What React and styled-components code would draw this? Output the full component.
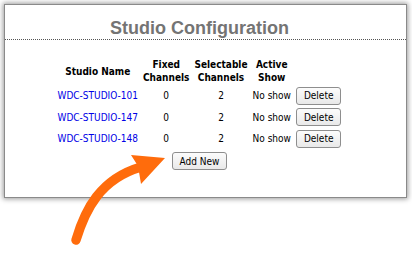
import React from 'react';
import styled, { createGlobalStyle } from 'styled-components';

const studios = [
    { name: 'WDC-STUDIO-101', fixed: 0, selectable: 2, show: 'No show' },
    { name: 'WDC-STUDIO-147', fixed: 0, selectable: 2, show: 'No show' },
    { name: 'WDC-STUDIO-148', fixed: 0, selectable: 2, show: 'No show' },
];

export default function App() {
    return (
        <>
            <Global />
            <Page>
                <Panel>
                    <Title>Studio Configuration</Title>
                    <Body>
                        <Table>
                            <colgroup>
                                <col style={{ width: 80 }} />
                                <col style={{ width: 46 }} />
                                <col style={{ width: 51 }} />
                                <col style={{ width: 37 }} />
                                <col style={{ width: 45 }} />
                            </colgroup>
                            <thead>
                                <tr>
                                    <Th>Studio Name</Th>
                                    <Th>Fixed Channels</Th>
                                    <Th>Selectable Channels</Th>
                                    <Th>Active Show</Th>
                                    <Th />
                                </tr>
                            </thead>
                            <tbody>
                                {studios.map(s => (
                                    <tr key={s.name}>
                                        <Td><StudioLink href="#">{s.name}</StudioLink></Td>
                                        <Td>{s.fixed}</Td>
                                        <Td>{s.selectable}</Td>
                                        <Td>{s.show}</Td>
                                        <Td><Button>Delete</Button></Td>
                                    </tr>
                                ))}
                            </tbody>
                        </Table>
                        <Actions>
                            <Button>Add New</Button>
                        </Actions>
                    </Body>
                </Panel>
                <Arrow width="412" height="255" viewBox="0 0 412 255">
                    <path
                        d="M 76 240 C 85 210, 100 179, 141 167"
                        fill="none"
                        stroke="#ff6c0c"
                        strokeWidth="9.5"
                        strokeLinecap="round"
                    />
                    <path d="M 165 158 L 131 155 L 138 166 L 141 184 Z" fill="#ff6c0c" />
                </Arrow>
            </Page>
        </>
    );
}

const Global = createGlobalStyle`
    html, body {
        margin: 0;
        background: #fff;
    }
    body {
        font-family: "DejaVu Sans Condensed", "DejaVu Sans", "Liberation Sans", sans-serif;
        font-stretch: condensed;
    }
`;

const Page = styled.div`
    position: relative;
    width: 412px;
    height: 255px;
    padding: 5px;
    box-sizing: border-box;
    overflow: hidden;
`;

const Panel = styled.div`
    width: 401px;
    background: #fff;
    box-shadow: 0 0 0 1px #8a8a8a, 0 0 5px 2px rgba(0, 0, 0, 0.4);
`;

const Title = styled.div`
    padding: 12px 12px 0 0;
    font-family: "Liberation Sans", Arial, sans-serif;
    font-stretch: normal;
    font-weight: 700;
    font-size: 18px;
    line-height: 22px;
    color: #747474;
    text-align: center;
    border-bottom: 1px dotted #555;
`;

const Body = styled.div`
    padding: 16px 12px 27px 0;
`;

const Table = styled.table`
    table-layout: fixed;
    border-collapse: separate;
    border-spacing: 5px 2px;
    margin: 0 auto;
    font-size: 10px;
    color: #000;
`;

const Th = styled.th`
    padding: 0;
    height: 26px;
    line-height: 13px;
    font-weight: 700;
    text-align: center;
    vertical-align: middle;
`;

const Td = styled.td`
    padding: 0;
    height: 19.5px;
    text-align: center;
    vertical-align: middle;
    white-space: nowrap;
`;

const StudioLink = styled.a`
    color: #0000e6;
    text-decoration: none;
`;

const Button = styled.button`
    height: 18px;
    padding: 0 7px;
    font-family: inherit;
    font-stretch: condensed;
    font-size: 10px;
    color: #000;
    background: linear-gradient(#fcfcfc, #e9e9e9);
    border: 1px solid #8e8e8e;
    border-radius: 3px;
    vertical-align: middle;
`;

const Actions = styled.div`
    margin-top: 1.5px;
    text-align: center;
    line-height: 0;
`;

const Arrow = styled.svg`
    position: absolute;
    left: 0;
    top: 0;
    pointer-events: none;
`;
